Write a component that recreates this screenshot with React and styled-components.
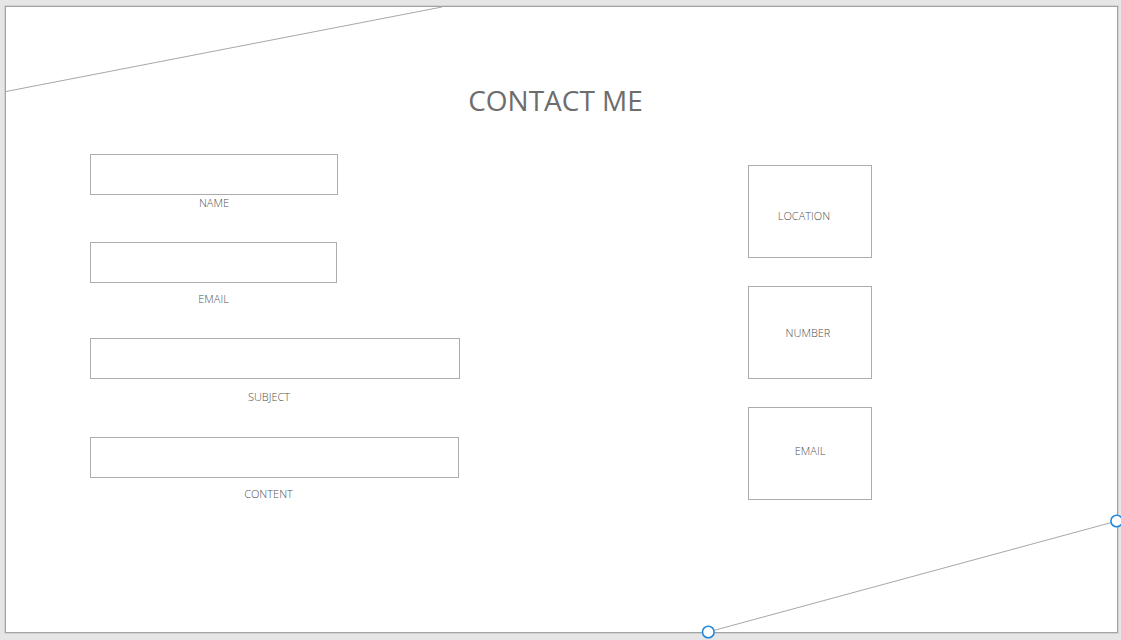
import React from "react";
import styled, { createGlobalStyle } from "styled-components";

const Global = createGlobalStyle`
  html, body { margin: 0; padding: 0; background: #e6e6e6; }
  body { font-family: "Open Sans", "Noto Sans", sans-serif; }
  #root { width: 1121px; height: 640px; overflow: hidden; }
`;

const Slide = styled.div`
  position: relative;
  box-sizing: content-box;
  margin: 6px 0 0 5px;
  width: 1111px;
  height: 625px;
  background: #ffffff;
  border: 1px solid #a3a3a3;
  box-shadow: 0 0 0 1px #d2d2d2;
`;

const Decor = styled.svg`
  position: absolute;
  left: 0;
  top: 0;
  overflow: visible;
  pointer-events: none;
`;

const Title = styled.h1`
  margin: 0;
  padding: 73px 12px 0 0;
  text-align: center;
  font-family: "Open Sans", "Noto Sans", sans-serif;
  font-weight: 400;
  font-size: 28px;
  line-height: 40px;
  color: #6d6d6d;
`;

const Columns = styled.div`
  display: grid;
  grid-template-columns: 370px 124px;
  column-gap: 288px;
  align-items: start;
  margin-top: 34px;
  padding-left: 84px;
`;

const FormColumn = styled.div`
  display: flex;
  flex-direction: column;
  gap: 31px;
`;

const Field = styled.div`
  display: flex;
  flex-direction: column;
  width: ${(p) => p.$w}px;
  margin-top: ${(p) => p.$mt}px;
`;

const InputBox = styled.div`
  box-sizing: border-box;
  height: 41px;
  width: 100%;
  border: 1px solid #acacac;
  background: #fff;
`;

const Label = styled.div`
  margin-top: ${(p) => p.$gap}px;
  text-align: center;
  transform: translateX(${(p) => p.$dx}px);
  font-size: 11px;
  line-height: 16px;
  font-weight: 300;
  color: #4f4f4f;
`;

const InfoColumn = styled.div`
  display: flex;
  flex-direction: column;
  gap: 28px;
  padding-top: 11px;
`;

const Card = styled.div`
  box-sizing: border-box;
  width: 124px;
  height: 93px;
  border: 1px solid #acacac;
  display: flex;
  align-items: center;
  justify-content: center;
`;

const CardLabel = styled.span`
  transform: translate(${(p) => p.$dx}px, ${(p) => p.$dy}px);
  font-size: 11px;
  line-height: 16px;
  font-weight: 300;
  color: #4f4f4f;
`;

const fields = [
  { label: "NAME", w: 248, gap: 0, dx: 0, mt: 0 },
  { label: "EMAIL", w: 247, gap: 8, dx: 0, mt: 0 },
  { label: "SUBJECT", w: 370, gap: 10, dx: -6, mt: 0 },
  { label: "CONTENT", w: 369, gap: 8, dx: -6, mt: 1 },
];

const cards = [
  { label: "LOCATION", dx: -6, dy: 4 },
  { label: "NUMBER", dx: -2, dy: 0 },
  { label: "EMAIL", dx: 0, dy: -3 },
];

export default function App() {
  return (
    <>
      <Global />
      <Slide>
        <Decor width="1111" height="625" viewBox="0 0 1111 625">
          <line x1="0" y1="84.5" x2="436" y2="0" stroke="#a8a8a8" strokeWidth="1" />
          <line x1="702" y1="625" x2="1111" y2="514" stroke="#a8a8a8" strokeWidth="1" />
          <circle cx="702.3" cy="625" r="5.8" fill="#fff" stroke="#2188e0" strokeWidth="1.6" />
          <circle cx="1110.7" cy="514" r="5.8" fill="#fff" stroke="#2188e0" strokeWidth="1.6" />
        </Decor>
        <Title>CONTACT ME</Title>
        <Columns>
          <FormColumn>
            {fields.map((f) => (
              <Field key={f.label} $w={f.w} $mt={f.mt}>
                <InputBox />
                <Label $gap={f.gap} $dx={f.dx}>{f.label}</Label>
              </Field>
            ))}
          </FormColumn>
          <InfoColumn>
            {cards.map((c) => (
              <Card key={c.label}>
                <CardLabel $dx={c.dx} $dy={c.dy}>{c.label}</CardLabel>
              </Card>
            ))}
          </InfoColumn>
        </Columns>
      </Slide>
    </>
  );
}
